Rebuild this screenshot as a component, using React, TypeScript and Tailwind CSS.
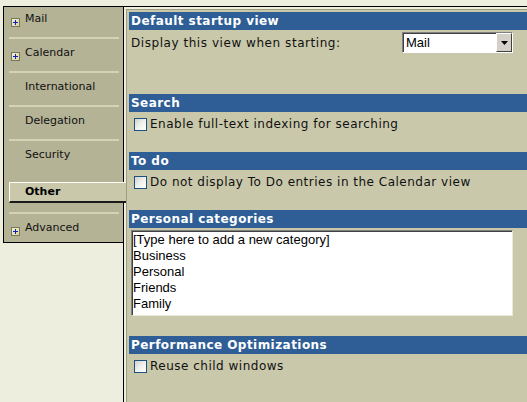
import React from "react";

const SANS = { fontFamily: '"DejaVu Sans", Verdana, sans-serif' };
const ARIAL = { fontFamily: '"Liberation Sans", Arial, sans-serif' };

function Plus() {
  return (
    <span className="mr-[5px] mt-[6px] inline-flex h-[9px] w-[9px] shrink-0 items-center justify-center border border-[#77775a] bg-linear-to-br from-[#f4f0c8] to-[#d8d4a0]">
      <svg width="7" height="7" viewBox="0 0 7 7">
        <rect x="3" y="1" width="1" height="5" fill="#0a1fc8" />
        <rect x="1" y="3" width="5" height="1" fill="#0a1fc8" />
      </svg>
    </span>
  );
}

function Sep() {
  return <div className="h-[2px] w-[110px] bg-[#d3d2b8]" />;
}

function NavItem({ label, plus }: { label: string; plus?: boolean }) {
  return (
    <div className="flex h-[13px] items-start pl-[2px]">
      {plus ? <Plus /> : <span className="w-[14px] shrink-0" />}
      <span className="block text-[11px] leading-[13px] text-[#101010]">{label}</span>
    </div>
  );
}

function Header({ children }: { children: React.ReactNode }) {
  return (
    <div className="flex h-[18px] items-center bg-[#2e5e95] pl-[2px] text-[12px] font-bold tracking-[0.45px] text-white">
      {children}
    </div>
  );
}

function Check() {
  return (
    <span className="inline-block h-[13px] w-[13px] shrink-0 border border-[#1c5180] bg-linear-to-br from-[#d2d2ca] via-[#f0f0ec] to-white" />
  );
}

function CheckRow({ label }: { label: string }) {
  return (
    <div className="flex h-[24px] items-center pl-[5px]">
      <Check />
      <span className="ml-[3px] text-[12px] tracking-[0.5px] text-[#101010]">{label}</span>
    </div>
  );
}

export default function App() {
  return (
    <div className="h-[402px] w-[527px] overflow-hidden bg-[#eeeedf] pl-[3px] pt-[6px]" style={SANS}>
      <div className="flex h-[396px] border-t border-black">
        {/* Sidebar */}
        <div className="w-[120px] self-start border-b border-l border-black bg-[#b4b396] pb-[8px] pl-[5px] pt-[5px]">
          <NavItem label="Mail" plus />
          <div className="h-[12px]" />
          <Sep />
          <div className="h-[7px]" />
          <NavItem label="Calendar" plus />
          <div className="h-[12px]" />
          <Sep />
          <div className="h-[7px]" />
          <NavItem label="International" />
          <div className="h-[12px]" />
          <Sep />
          <div className="h-[7px]" />
          <NavItem label="Delegation" />
          <div className="h-[12px]" />
          <Sep />
          <div className="h-[7px]" />
          <NavItem label="Security" />
          <div className="h-[21px]" />
          <div className="relative z-10 mr-[-3px] h-[21px] border-b-2 border-l border-t border-b-[#1a1a1a] border-l-white border-t-white bg-[#c9c8ab] pl-[15px] pt-[2px]">
            <div className="text-[11px] font-bold leading-[13px] text-black">Other</div>
          </div>
          <div className="h-[9px]" />
          <Sep />
          <div className="h-[7px]" />
          <NavItem label="Advanced" plus />
        </div>

        {/* Main */}
        <div className="flex flex-1 flex-col border-l border-black pl-[2px] pt-[2px]">
          <div className="flex-1 border-l border-t border-[#9e9d84] bg-[#c9c8ab] pl-[2px] pt-[2px]">
            <Header>Default startup view</Header>
            <div className="flex h-[25px] items-center pl-[2px] pr-[14px]">
              <span className="text-[12px] tracking-[0.55px] text-[#101010]">Display this view when starting:</span>
              <div className="ml-auto flex h-[21px] w-[111px] border-b border-l border-r border-t border-b-white border-l-[#808080] border-r-white border-t-[#808080]">
                <div className="flex flex-1 items-center bg-white pl-[3px] shadow-[inset_1px_1px_0_#404040] text-[13px] text-black" style={ARIAL}>
                  Mail
                </div>
                <div className="flex w-[16px] items-center justify-center border-b border-l border-r border-t border-b-[#404040] border-l-[#ffffff] border-r-[#404040] border-t-[#ffffff] bg-[#d4d0c8]">
                  <svg width="7" height="4" viewBox="0 0 7 4">
                    <path d="M0 0h7L3.5 4z" fill="#000" />
                  </svg>
                </div>
              </div>
            </div>
            <div className="h-[39px]" />
            <Header>Search</Header>
            <CheckRow label="Enable full-text indexing for searching" />
            <div className="h-[16px]" />
            <Header>To do</Header>
            <CheckRow label="Do not display To Do entries in the Calendar view" />
            <div className="h-[16px]" />
            <Header>Personal categories</Header>
            <div className="ml-[2px] mr-[14px] mt-[2px] h-[86px] border-b border-l border-r border-t border-b-[#ece9d8] border-l-[#808080] border-r-[#ece9d8] border-t-[#808080] bg-white pl-[1px] pt-[1px] text-[13px] leading-[16px] text-black shadow-[inset_1px_1px_0_#404040]" style={ARIAL}>
              <div>[Type here to add a new category]</div>
              <div>Business</div>
              <div>Personal</div>
              <div>Friends</div>
              <div>Family</div>
            </div>
            <div className="h-[20px]" />
            <Header>Performance Optimizations</Header>
            <CheckRow label="Reuse child windows" />
          </div>
        </div>
      </div>
    </div>
  );
}
